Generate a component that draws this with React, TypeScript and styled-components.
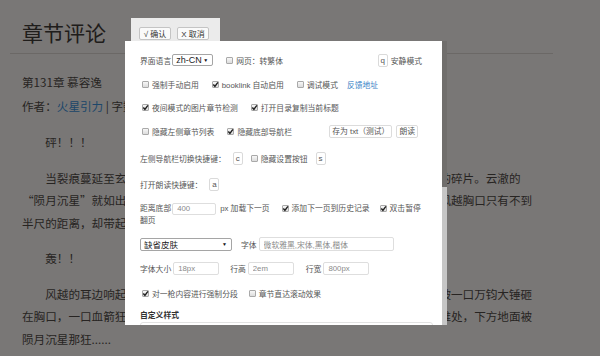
import React from "react";
import styled, { createGlobalStyle } from "styled-components";

const GlobalStyle = createGlobalStyle`
  html, body { margin: 0; padding: 0; background: #7a7877; }
  #root { width: 600px; height: 356px; }
`;

const Screen = styled.div`
  position: relative;
  width: 600px;
  height: 356px;
  overflow: hidden;
  background: #f3efed;
`;

const Article = styled.div`
  margin-left: 10px;
  width: 543px;
  color: #4f4945;
  font-family: "Noto Sans CJK SC", "Noto Sans", sans-serif;
`;

const Header = styled.header`
  padding: 17px 0 6px 12px;
  border-bottom: 1px solid #d6d1cd;
`;

const Title = styled.h1`
  margin: 0;
  font-size: 21px;
  line-height: 30px;
  font-weight: 400;
  color: #3f3a37;
`;

const Content = styled.div`
  width: 516px;
  padding: 0 12px;
  font-size: 11.6px;
`;

const Meta = styled.div`
  margin-top: 17px;
`;

const MetaLine = styled.div`
  line-height: 23.5px;
  white-space: nowrap;
`;

const Author = styled.a`
  color: #3b8ed4;
  text-decoration: none;
`;

const Para = styled.p`
  margin: 13px 0 0;
  line-height: 22.5px;
  text-indent: 2em;
`;

const Overlay = styled.div`
  position: absolute;
  inset: 0;
  background: rgba(0, 0, 0, 0.5);
`;

const Modal = styled.div`
  position: absolute;
  left: 125px;
  top: 18px;
  font-family: "Liberation Sans", "Noto Sans CJK SC", sans-serif;
  font-size: 7.8px;
  color: #555;
`;

const Toolbar = styled.div`
  margin-left: 6px;
  width: 89px;
  height: 23px;
  box-sizing: border-box;
  padding: 9px 0 0 8px;
  background: #ebebeb;
  display: flex;
  align-items: flex-start;
  gap: 6px;
`;

const ToolButton = styled.button`
  width: 32px;
  height: 13px;
  padding: 0;
  border: 1px solid #c4c4c4;
  border-radius: 2px;
  background: #fafafa;
  font: inherit;
  font-size: 8px;
  color: #333;
  display: flex;
  align-items: center;
  justify-content: center;
`;

const Frame = styled.div`
  display: flex;
`;

const Panel = styled.div`
  width: 317px;
  height: 284px;
  box-sizing: border-box;
  padding: 12px 18px 0 15px;
  background: #fff;
  overflow: hidden;
`;

const ScrollTrack = styled.div`
  width: 5px;
  height: 284px;
  background: #c6c6c6;
`;

const ScrollThumb = styled.div`
  height: 146px;
  background: #706e6c;
`;

const Row = styled.div<{ $mt?: number }>`
  display: flex;
  align-items: center;
  height: 14px;
  margin-top: ${(p) => p.$mt ?? 0}px;
  white-space: nowrap;
`;

const FlowRow = styled.div<{ $mt?: number }>`
  margin-top: ${(p) => p.$mt ?? 0}px;
  line-height: 12px;
`;

const Label = styled.span<{ $ml?: number }>`
  margin-left: ${(p) => p.$ml ?? 0}px;
  flex: none;
`;

const Check = styled.label<{ $ml?: number }>`
  display: inline-flex;
  align-items: center;
  margin-left: ${(p) => p.$ml ?? 0}px;
`;

const InlineCheck = styled.label<{ $ml?: number }>`
  display: inline;
  margin-left: ${(p) => p.$ml ?? 0}px;
`;

const Box = styled.span`
  display: inline-block;
  flex: none;
  width: 7px;
  height: 7px;
  box-sizing: border-box;
  border: 1px solid #a9a9a9;
  border-radius: 1px;
  background: linear-gradient(#f7f7f7, #dcdcdc);
  margin-right: 3px;
  vertical-align: middle;
`;

const TickSvg = styled.svg`
  display: block;
  margin: -1px;
  overflow: visible;
`;

const Key = styled.span<{ $ml?: number }>`
  display: inline-flex;
  align-items: center;
  justify-content: center;
  flex: none;
  width: 10px;
  height: 13px;
  box-sizing: border-box;
  border: 1px solid #dadada;
  border-radius: 2px;
  font-size: 8px;
  color: #555;
  margin-left: ${(p) => p.$ml ?? 0}px;
`;

const Field = styled.input<{ $w: number; $h?: number; $ml?: number }>`
  width: ${(p) => p.$w}px;
  height: ${(p) => p.$h ?? 13}px;
  box-sizing: border-box;
  margin: 0 0 0 ${(p) => p.$ml ?? 0}px;
  padding: 0 4px;
  border: 1px solid #dedede;
  border-radius: 2px;
  font: inherit;
  font-size: 7.8px;
  color: #8a8a8a;
  background: #fff;
  outline: none;
  flex: none;
`;

const InlineField = styled(Field)`
  display: inline-block;
  vertical-align: top;
  height: 12px;
  margin: 0 4px 0 1px;
`;

const Select = styled.div<{ $w: number; $h: number; $size: number; $ml?: number }>`
  display: flex;
  align-items: center;
  justify-content: space-between;
  flex: none;
  width: ${(p) => p.$w}px;
  height: ${(p) => p.$h}px;
  box-sizing: border-box;
  padding: 0 4px 0 3px;
  margin-left: ${(p) => p.$ml ?? 0}px;
  border: 1px solid #a5a5a5;
  border-radius: 2px;
  font-size: ${(p) => p.$size}px;
  color: #222;
`;

const Caret = styled.span`
  font-size: 5px;
  color: #111;
`;

const RightGroup = styled.div<{ $mr: number; $gap: number }>`
  display: flex;
  align-items: center;
  gap: ${(p) => p.$gap}px;
  margin-left: auto;
  margin-right: ${(p) => p.$mr}px;
`;

const SmallButton = styled.button`
  height: 13px;
  padding: 0 2px;
  border: 1px solid #dcdcdc;
  border-radius: 2px;
  background: #fff;
  font: inherit;
  color: #555;
  line-height: 11px;
`;

const Link = styled.a`
  margin-left: 9px;
  color: #3a83c6;
  text-decoration: none;
`;

const SectionTitle = styled.div<{ $mt?: number }>`
  margin-top: ${(p) => p.$mt ?? 0}px;
  height: 13px;
  line-height: 13px;
  font-weight: bold;
  color: #333;
`;

const StyleArea = styled.textarea`
  display: block;
  width: 293px;
  height: 90px;
  box-sizing: border-box;
  margin: 0;
  border: 1px solid #e2e2e2;
  border-radius: 3px;
  resize: none;
`;

const CheckBox = ({ on }: { on?: boolean }) => (
  <Box>
    {on && (
      <TickSvg width="7" height="7" viewBox="0 0 7 7">
        <path d="M1.3 3.6 L2.9 5.3 L5.9 1.3" fill="none" stroke="#1e1e1e" strokeWidth="1.4" />
      </TickSvg>
    )}
  </Box>
);

export default function App() {
  return (
    <>
      <GlobalStyle />
      <Screen lang="zh-CN">
        <Article>
          <Header>
            <Title>章节评论</Title>
          </Header>
          <Content>
            <Meta>
              <MetaLine>第131章 慕容逸</MetaLine>
              <MetaLine>
                作者：<Author>火星引力</Author> | 字数：3128 | 更新时间：2019-03-12
              </MetaLine>
            </Meta>
            <Para>砰！！！</Para>
            <Para>
              当裂痕蔓延至玄重剑的剑柄之时，整柄玄重剑轰然崩碎，化作了无数漫天飞溅的碎片。云澈的“陨月沉星”就如出鞘的狂龙，带着毁天灭地的恐怖威势直刺而来，剑尖此刻距离风越胸口只有不到半尺的距离，却带起了一阵足以撕裂空气的尖啸。
            </Para>
            <Para>轰！！</Para>
            <Para>
              风越的耳边响起一声沉闷至极的巨响，整个人如遭重击般倒飞而出，他就像是被一口万钧大锤砸在胸口，一口血箭狂喷而出，整个人被轰得横飞出十余丈远，重重地砸落在了碎石堆处，下方地面被陨月沉星那狂......
            </Para>
          </Content>
        </Article>
        <Overlay />
        <Modal>
          <Toolbar>
            <ToolButton>√ 确认</ToolButton>
            <ToolButton>X 取消</ToolButton>
          </Toolbar>
          <Frame>
            <Panel>
              <Row>
                <Label>界面语言</Label>
                <Select $w={41} $h={12} $size={9} $ml={1}>
                  zh-CN<Caret>▼</Caret>
                </Select>
                <Check $ml={13}>
                  <CheckBox />
                  网页：转繁体
                </Check>
                <RightGroup $mr={2} $gap={3}>
                  <Key>q</Key>
                  <Label>安静模式</Label>
                </RightGroup>
              </Row>
              <Row $mt={10}>
                <Check $ml={2}>
                  <CheckBox />
                  强制手动启用
                </Check>
                <Check $ml={13}>
                  <CheckBox on />
                  booklink 自动启用
                </Check>
                <Check $ml={13}>
                  <CheckBox />
                  调试模式
                </Check>
                <Link>反馈地址</Link>
              </Row>
              <Row $mt={9}>
                <Check $ml={2}>
                  <CheckBox on />
                  夜间模式的图片章节检测
                </Check>
                <Check $ml={13}>
                  <CheckBox on />
                  打开目录复制当前标题
                </Check>
              </Row>
              <Row $mt={10}>
                <Check $ml={2}>
                  <CheckBox />
                  隐藏左侧章节列表
                </Check>
                <Check $ml={13}>
                  <CheckBox on />
                  隐藏底部导航栏
                </Check>
                <RightGroup $mr={6} $gap={4}>
                  <SmallButton>存为 txt（测试）</SmallButton>
                  <SmallButton>朗读</SmallButton>
                </RightGroup>
              </Row>
              <Row $mt={13}>
                <Label>左侧导航栏切换快捷键：</Label>
                <Key $ml={7}>c</Key>
                <Check $ml={8}>
                  <CheckBox />
                  隐藏设置按钮
                </Check>
                <Key $ml={8}>s</Key>
              </Row>
              <Row $mt={12}>
                <Label>打开朗读快捷键：</Label>
                <Key $ml={7}>a</Key>
              </Row>
              <FlowRow $mt={12}>
                距离底部
                <InlineField $w={44} defaultValue="400" />
                px 加载下一页
                <InlineCheck $ml={12}>
                  <CheckBox on />
                  添加下一页到历史记录
                </InlineCheck>
                <InlineCheck $ml={10}>
                  <CheckBox on />
                  双击暂停翻页
                </InlineCheck>
              </FlowRow>
              <Row $mt={10}>
                <Select $w={92} $h={13} $size={8.5}>
                  缺省皮肤<Caret>▼</Caret>
                </Select>
                <Label $ml={9}>字体</Label>
                <Field $w={135} $h={14} $ml={2} defaultValue="微软雅黑,宋体,黑体,楷体" />
              </Row>
              <Row $mt={10}>
                <Label>字体大小</Label>
                <Field $w={46} $ml={2} defaultValue="18px" />
                <Label $ml={11}>行高</Label>
                <Field $w={46} $ml={2} defaultValue="2em" />
                <Label $ml={12}>行宽</Label>
                <Field $w={46} $ml={2} defaultValue="800px" />
              </Row>
              <Row $mt={11}>
                <Check $ml={2}>
                  <CheckBox on />
                  对一枪内容进行强制分段
                </Check>
                <Check $ml={11}>
                  <CheckBox />
                  章节直达滚动效果
                </Check>
              </Row>
              <SectionTitle $mt={9}>自定义样式</SectionTitle>
              <StyleArea />
            </Panel>
            <ScrollTrack>
              <ScrollThumb />
            </ScrollTrack>
          </Frame>
        </Modal>
      </Screen>
    </>
  );
}
